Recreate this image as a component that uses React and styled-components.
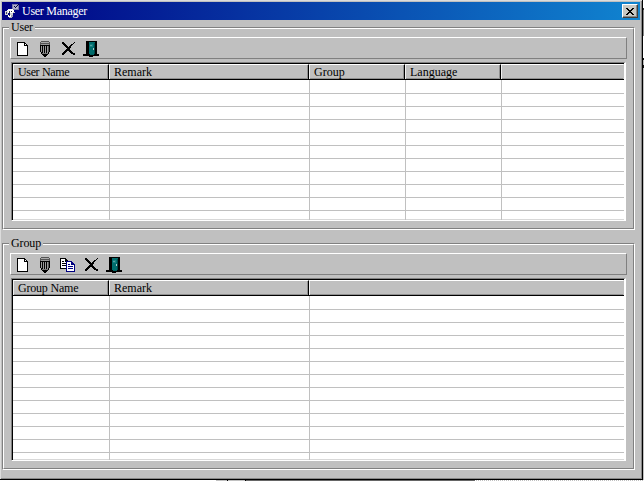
import React from 'react';
import styled, { createGlobalStyle } from 'styled-components';

const Global = createGlobalStyle`
  * { box-sizing: border-box; }
  body { margin: 0; background: #fff; overflow: hidden; }
`;

const Desktop = styled.div`
  width: 644px;
  height: 481px;
  display: grid;
  grid-template: 480px 1px / 643px 1px;
  font: 12px/14px "Liberation Serif", serif;
  color: #000;
`;

const Window = styled.main`
  display: flex;
  flex-direction: column;
  background: #c0c0c0;
  border: solid #000;
  border-width: 0 1px 1px 0;
  box-shadow: inset 1px 1px 0 #dcdcdc, inset -1px -1px 0 #888;
  padding: 2px 1px 0 2px;
`;

const TitleBar = styled.header`
  display: flex;
  align-items: center;
  height: 18px;
  width: 638px;
  padding: 0 2px 0 2px;
  background: linear-gradient(90deg, #000084, #1084d0);
  color: #fff;
  svg { display: block; flex: none; }
`;

const Title = styled.h1`
  flex: 1;
  margin: 0 0 0 2px;
  font: inherit;
  letter-spacing: ${(p) => p.$spacing || '0'};
`;

const CloseButton = styled.button`
  width: 16px;
  height: 14px;
  padding: 0;
  display: grid;
  place-items: center;
  background: #c8c8c4;
  border: 1px solid;
  border-color: #fff #404040 #404040 #fff;
  box-shadow: inset -1px -1px 0 #888;
`;

const GroupBox = styled.section`
  width: 633px;
  height: ${(p) => p.$height}px;
  margin-top: ${(p) => p.$top}px;
  display: grid;
  grid-template: 7px 1fr / 1fr;
`;

const BoxFrame = styled.div`
  grid-area: 2 / 1;
  border: 1px solid #808080;
  border-color: #808080 #fff #fff #808080;
`;

const BoxInner = styled.div`
  height: 100%;
  border: 1px solid;
  border-color: #fff #808080 #808080 #fff;
  padding: 8px 0 0 6px;
`;

const BoxLabel = styled.div`
  grid-area: 1 / 1;
  z-index: 1;
  justify-self: start;
  height: 14px;
  margin-left: 7px;
  padding: 0 2px;
  background: #c0c0c0;
  letter-spacing: ${(p) => p.$spacing || '0'};
`;

const Toolbar = styled.div`
  display: flex;
  align-items: flex-start;
  width: 617px;
  height: 22px;
  padding: 3px 0 0 6px;
  border: 1px solid;
  border-color: #fff #808080 #808080 #fff;
`;

const Tool = styled.button`
  width: ${(p) => p.$width || 23}px;
  height: 16px;
  padding: 0;
  border: 0;
  background: none;
  svg { display: block; }
`;

const Grid = styled.div`
  display: flex;
  flex-direction: column;
  width: 615px;
  height: ${(p) => p.$height}px;
  margin: 3px 0 0 1px;
  border: solid;
  border-width: 1px 2px 1px 1px;
  border-color: #808080 #fff #fff #808080;
`;

const GridView = styled.div`
  flex: 1;
  min-height: 0;
  display: flex;
  flex-direction: column;
  border: solid #000;
  border-width: 1px 0 0 1px;
  background: #fff;
  box-shadow: inset 0 -1px 0 #d8d8d8;
  overflow: hidden;
`;

const Header = styled.div`
  display: grid;
  grid-template-columns: ${(p) => p.$columns};
  flex: 0 0 16px;
  border-bottom: 1px solid #000;
`;

const HeaderCell = styled.div`
  background: #c0c0c0;
  border: solid;
  border-width: 1px 1px 0 1px;
  border-color: #fff ${(p) => (p.$last ? '#c0c0c0' : '#000')} #fff #f0f0f0;
  box-shadow: inset 0 -1px 0 #909090${(p) => (p.$last ? '' : ', inset -1px 0 0 #909090')};
  padding-left: 4px;
  line-height: 14px;
  white-space: nowrap;
  letter-spacing: ${(p) => p.$spacing || '0'};
`;

const Row = styled.div`
  display: grid;
  grid-template-columns: ${(p) => p.$columns};
  flex: 0 0 13px;
  border-bottom: 1px solid #c0c0c0;
  &:nth-child(2) { flex-basis: 14px; }
`;

const Cell = styled.div`
  border-left: ${(p) => (p.$first ? '0' : '1px solid #c0c0c0')};
`;

const RightBackdrop = styled.div`
  background: linear-gradient(#fff 0 8px, #333 8px 10px, #888 10px 36px, #fff 36px 58px, #111 58px 60px, #bbb 60px 65px, #111 65px 68px, #c0c0c0 68px);
`;

const BottomBackdrop = styled.div`
  grid-column: 1 / -1;
  background:
    linear-gradient(90deg, #fff 0 216px, #c0c0c0 216px 227px, #000 227px 228px, #c0c0c0 228px 245px, #000 245px 246px, #666 246px 475px, transparent 475px),
    repeating-linear-gradient(90deg, #c0c0c0 0 1px, #fff 1px 2px);
`;

/* Every run is [x, y, width, height, colour]. */
const Pixels = ({ w, h = 16, runs }) => (
  <svg width={w} height={h} viewBox={`0 0 ${w} ${h}`} shapeRendering="crispEdges">
    {runs.map(([x, y, rw, rh, c], i) => (
      <rect key={i} x={x} y={y} width={rw} height={rh} fill={c || '#000'} />
    ))}
  </svg>
);

const PageIcon = () => (
  <svg width="11" height="16" shapeRendering="crispEdges">
    <path d="M0 1H8V2H9V3H10V4H11V15H0Z" fill="#000" />
    <path d="M1 2H7V5H10V14H1Z" fill="#fff" />
    <path d="M8 3H9V4H8Z" fill="#fff" />
  </svg>
);

const PencilIcon = () => (
  <Pixels w={10} runs={[
    [1, 0, 8, 1, '#555'], [0, 1, 10, 4, '#555'], [1, 1, 8, 1, '#aaa'], [1, 3, 8, 1, '#999'],
    [0, 4, 10, 1], [0, 5, 1, 6], [1, 5, 8, 7, '#999'], [2, 5, 1, 7], [4, 5, 1, 7], [6, 5, 1, 7],
    [9, 5, 1, 6], [8, 5, 1, 7, '#555'], [1, 11, 1, 2], [8, 11, 1, 2], [2, 12, 6, 1, '#777'],
    [2, 13, 6, 1], [3, 14, 4, 1], [4, 15, 2, 1],
  ]} />
);

const DeleteIcon = () => (
  <Pixels w={14} runs={[
    [0, 1, 2, 1], [0, 2, 3, 1], [1, 3, 3, 1], [2, 4, 3, 1], [3, 5, 3, 1], [4, 6, 5, 1],
    [5, 7, 3, 1], [4, 8, 4, 1], [3, 9, 6, 1], [2, 10, 3, 1], [7, 10, 3, 1], [1, 11, 3, 1],
    [8, 11, 3, 1], [0, 12, 3, 1], [9, 12, 4, 1], [0, 13, 2, 1], [11, 13, 2, 1],
    [12, 1, 1, 1], [11, 2, 1, 1], [9, 3, 2, 1], [8, 4, 2, 1], [7, 5, 2, 1],
  ]} />
);

const DoorIcon = () => (
  <Pixels w={16} runs={[
    [3, 0, 11, 14], [6, 1, 6, 12, '#006c6c'], [7, 3, 3, 3, '#148080'], [7, 4, 2, 1, '#55a0a0'],
    [11, 2, 1, 11, '#004848'], [10, 7, 1, 2, '#b0c8c8'],
    [0, 13, 16, 2], [7, 13, 4, 1, '#006060'], [6, 15, 4, 1],
  ]} />
);

const CopyIcon = () => (
  <svg width="16" height="16" shapeRendering="crispEdges">
    <path d="M0 1H6V2H7V3H8V4H9V12H0Z" fill="#000" />
    <path d="M1 2H5V5H8V11H1Z" fill="#fff" />
    <path d="M2 4.5H4M2 6.5H6M2 8.5H6" stroke="#000" />
    <path d="M6 4H12V5H13V6H14V7H15V15H6Z" fill="#000080" />
    <path d="M7 5H11V8H14V14H7Z" fill="#fff" />
    <path d="M8 7.5H10M8 9.5H13M8 11.5H13" stroke="#000080" />
  </svg>
);

const AppIcon = () => (
  <Pixels w={16} runs={[
    [8, 1, 7, 6, '#7878a8'], [9, 2, 5, 4, '#b0b0cc'], [14, 1, 1, 1, '#000040'],
    [13, 2, 1, 1, '#000040'], [12, 3, 1, 1, '#000040'], [10, 3, 1, 1, '#000040'], [11, 4, 1, 1, '#000040'],
    [4, 6, 5, 1, '#fff'], [3, 7, 7, 3, '#fff'], [1, 8, 3, 4, '#d8d8d8'], [2, 9, 1, 2, '#404060'],
    [5, 8, 1, 2, '#303030'], [7, 8, 1, 1, '#303030'], [9, 9, 2, 1, '#c8c8c8'],
    [6, 10, 3, 3, '#d0d0d0'], [7, 12, 2, 2, '#a0a0b0'], [4, 12, 3, 2, '#fff'], [5, 12, 1, 1, '#303030'],
    [5, 14, 3, 1, '#b0b0c0'],
  ]} />
);

const CloseIcon = () => (
  <Pixels w={8} h={7} runs={[
    [0, 0, 2, 1], [6, 0, 2, 1], [1, 1, 2, 1], [5, 1, 2, 1], [2, 2, 4, 1], [3, 3, 2, 1],
    [2, 4, 4, 1], [1, 5, 2, 1], [5, 5, 2, 1], [0, 6, 2, 1], [6, 6, 2, 1],
  ]} />
);

const Table = ({ height, columns, headings, rows }) => (
  <Grid $height={height}>
    <GridView>
      <Header $columns={columns}>
        {headings.map(([text, spacing], i) => (
          <HeaderCell key={i} $spacing={spacing} $last={i === headings.length - 1}>{text}</HeaderCell>
        ))}
      </Header>
      {Array.from({ length: rows }, (_, r) => (
        <Row key={r} $columns={columns}>
          {headings.map((_, i) => <Cell key={i} $first={i === 0} />)}
        </Row>
      ))}
    </GridView>
  </Grid>
);

export default function App() {
  return (
    <Desktop>
      <Global />
      <Window>
        <TitleBar>
          <AppIcon />
          <Title $spacing="-0.28px">User Manager</Title>
          <CloseButton aria-label="Close"><CloseIcon /></CloseButton>
        </TitleBar>

        <GroupBox $top={0} $height={210}>
          <BoxLabel $spacing="-0.2px">User</BoxLabel>
          <BoxFrame>
            <BoxInner>
              <Toolbar>
                <Tool aria-label="New"><PageIcon /></Tool>
                <Tool aria-label="Edit" $width={22}><PencilIcon /></Tool>
                <Tool aria-label="Delete" $width={21}><DeleteIcon /></Tool>
                <Tool aria-label="Exit"><DoorIcon /></Tool>
              </Toolbar>
              <Table
                height={159}
                columns="96px 200px 96px 96px 1fr"
                headings={[['User Name', '-0.35px'], ['Remark'], ['Group'], ['Language'], ['']]}
                rows={11}
              />
            </BoxInner>
          </BoxFrame>
        </GroupBox>

        <GroupBox $top={6} $height={234}>
          <BoxLabel $spacing="-0.1px">Group</BoxLabel>
          <BoxFrame>
            <BoxInner>
              <Toolbar>
                <Tool aria-label="New group"><PageIcon /></Tool>
                <Tool aria-label="Edit group" $width={20}><PencilIcon /></Tool>
                <Tool aria-label="Copy group" $width={25}><CopyIcon /></Tool>
                <Tool aria-label="Delete group" $width={21}><DeleteIcon /></Tool>
                <Tool aria-label="Exit group"><DoorIcon /></Tool>
              </Toolbar>
              <Table
                height={183}
                columns="96px 200px 1fr"
                headings={[['Group Name', '-0.2px'], ['Remark'], ['']]}
                rows={13}
              />
            </BoxInner>
          </BoxFrame>
        </GroupBox>
      </Window>
      <RightBackdrop />
      <BottomBackdrop />
    </Desktop>
  );
}
